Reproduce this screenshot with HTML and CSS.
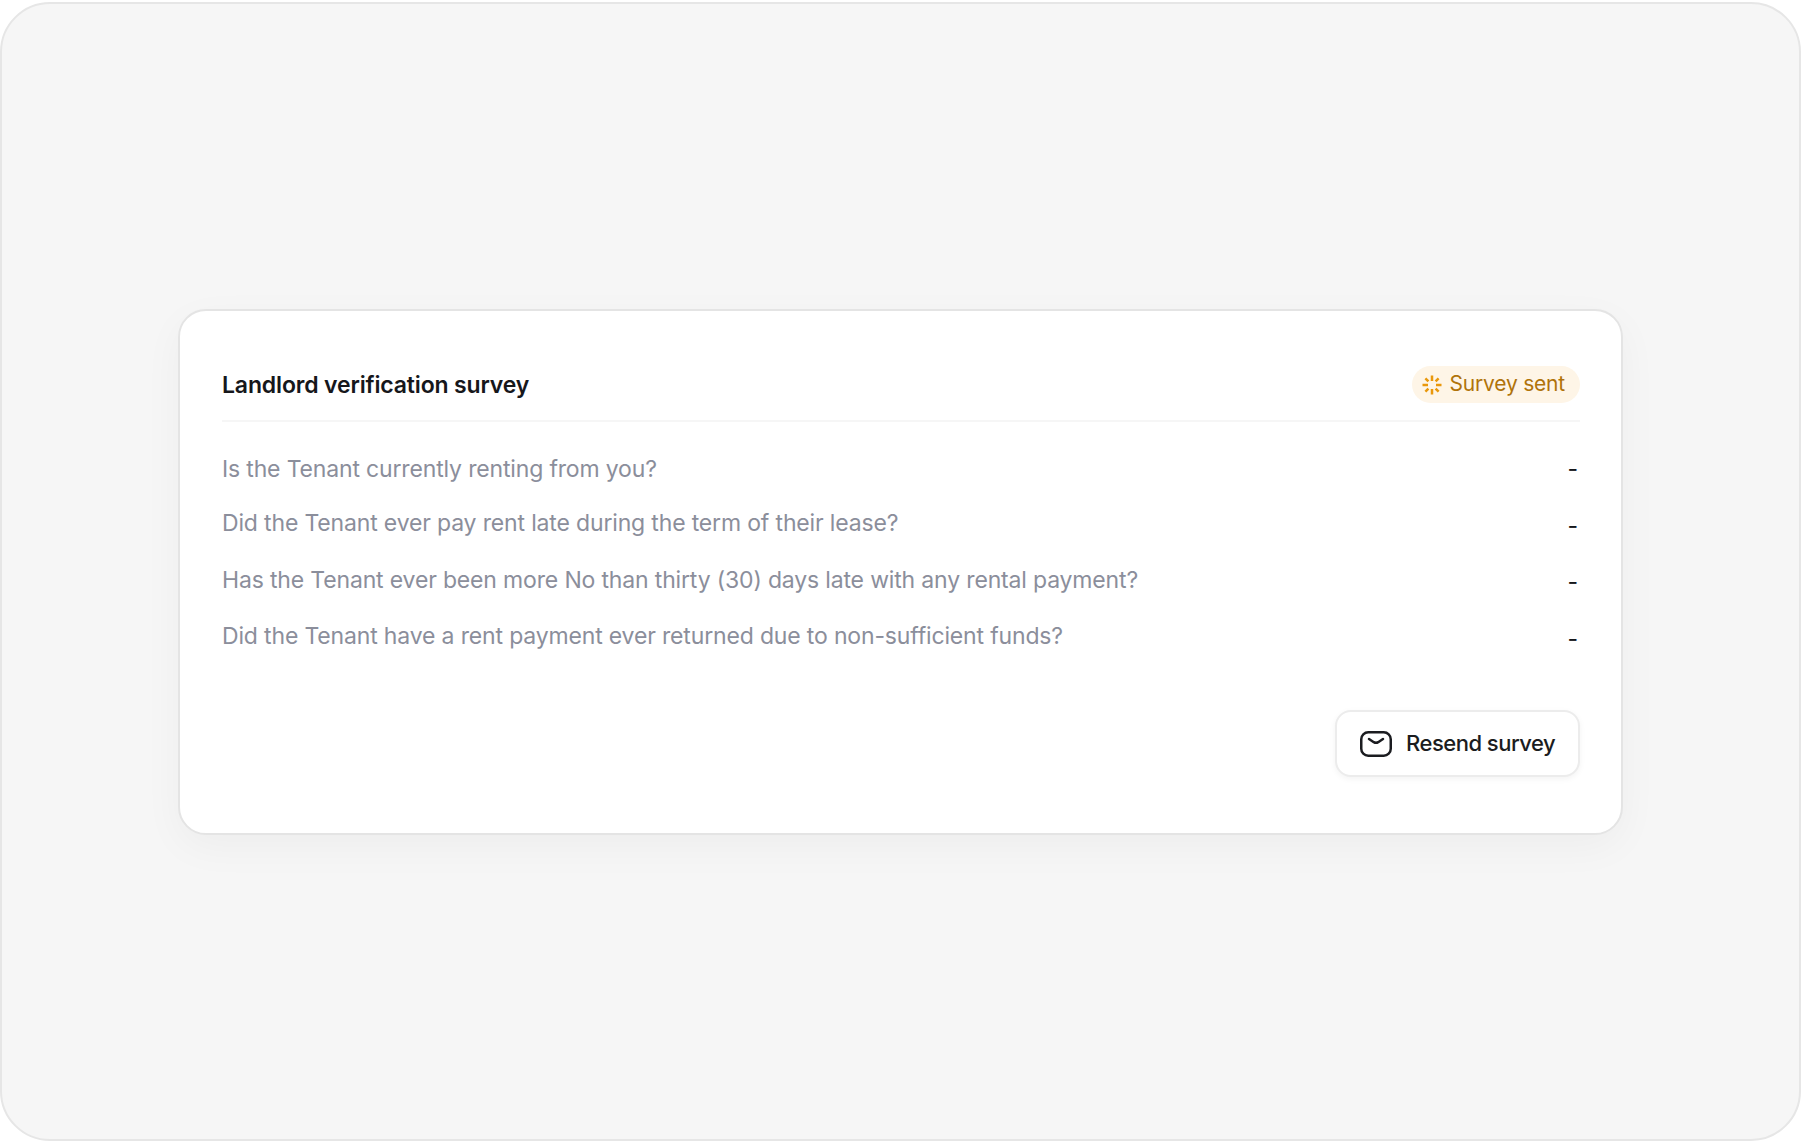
FILE: index.html
```html
<!DOCTYPE html>
<html lang="en">
<head>
<meta charset="utf-8">
<title>Landlord verification survey</title>
<link rel="stylesheet" href="styles.css">
</head>
<body>
<main class="frame">
  <section class="card">
    <header class="card-head">
      <h2 class="title">Landlord verification survey</h2>
      <span class="badge">
        <svg class="badge-icon" viewBox="0 0 20 20" fill="none" stroke="#e9980c" stroke-width="2.500" stroke-linecap="butt">
          <path d="M10 .5V6M10 14v5.500M.5 10H6M14 10h5.500M3.400 3.400l3 3M13.600 13.600l3 3M3.400 16.600l3-3M13.600 6.400l3-3"/>
        </svg>
        <span class="badge-text">Survey sent</span>
      </span>
    </header>
    <div class="rows">
      <div class="row"><span class="q">Is the Tenant currently renting from you?</span><span class="a">-</span></div>
      <div class="row"><span class="q">Did the Tenant ever pay rent late during the term of their lease?</span><span class="a">-</span></div>
      <div class="row"><span class="q">Has the Tenant ever been more No than thirty (30) days late with any rental payment?</span><span class="a">-</span></div>
      <div class="row"><span class="q">Did the Tenant have a rent payment ever returned due to non-sufficient funds?</span><span class="a">-</span></div>
    </div>
    <footer class="card-foot">
      <button class="btn" type="button">
        <svg class="btn-icon" viewBox="0 0 32 26" fill="none" stroke="#1b1c20" stroke-width="2.500" stroke-linecap="round" stroke-linejoin="round">
          <rect x="1.250" y="1.250" width="29.500" height="23.500" rx="7"/>
          <path d="M9 8l4.800 3.200q2.200 1.300 4.400 0L23 8"/>
        </svg>
        <span class="btn-text">Resend survey</span>
      </button>
    </footer>
  </section>
</main>
</body>
</html>
```
FILE: styles.css
```css
* { box-sizing: border-box; }
html, body { margin: 0; height: 100%; }
body { font-family: "Inter", "Liberation Sans", sans-serif; background: #fff; }
.frame {
  height: calc(100vh - 2px);
  margin-top: 2px;
  padding-top: 1px;
  display: flex;
  align-items: center;
  justify-content: center;
  background: #f6f6f6;
  border: 2px solid #e6e6e6;
  border-radius: 50px;
}
.card {
  width: 1445px;
  height: 526px;
  background: #fff;
  border: 2px solid #e4e4e4;
  border-radius: 28px;
  padding: 55px 41px 0 42px;
  box-shadow: 0 12px 40px rgba(0, 0, 0, 0.04);
  display: flex;
  flex-direction: column;
}
.card-head {
  display: flex;
  justify-content: space-between;
  align-items: flex-start;
  height: 56px;
  border-bottom: 2px solid #f6f6f6;
}
.title {
  margin: 0;
  padding-top: 5px;
  font-size: 23px;
  line-height: 28px;
  font-weight: 600;
  color: #16171b;
  letter-spacing: -0.15px;
}
.badge {
  display: flex;
  align-items: center;
  gap: 8px;
  height: 37px;
  padding: 0 15px 0 10px;
  border-radius: 19px;
  background: #fef5e7;
  color: #b0730a;
  font-size: 21px;
  letter-spacing: -0.2px;
}
.badge-text { padding-bottom: 2px; }
.badge-icon { width: 20px; height: 20px; }
.rows { display: flex; flex-direction: column; margin-top: 19px; }
.row {
  display: flex;
  justify-content: space-between;
  align-items: center;
  height: 56.500px;
  font-size: 23px;
  color: #8b8e9b;
}
.row + .row .q { padding-bottom: 5px; }
.q { letter-spacing: -0.16px; }
.a { color: #16171b; padding-right: 2px; }
.card-foot { display: flex; justify-content: flex-end; margin-top: 43px; }
.btn {
  display: flex;
  align-items: center;
  gap: 14px;
  width: 245px;
  height: 67px;
  padding: 0 23px;
  background: #fff;
  border: 2px solid #ececec;
  border-radius: 16px;
  box-shadow: 0 2px 6px rgba(0, 0, 0, 0.05);
  font: 500 22px "Inter", "Liberation Sans", sans-serif;
  letter-spacing: -0.5px;
  white-space: nowrap;
  color: #1b1c20;
}
.btn-text { padding-bottom: 2px; }
.btn-icon { width: 32px; height: 26px; flex: none; }
```
